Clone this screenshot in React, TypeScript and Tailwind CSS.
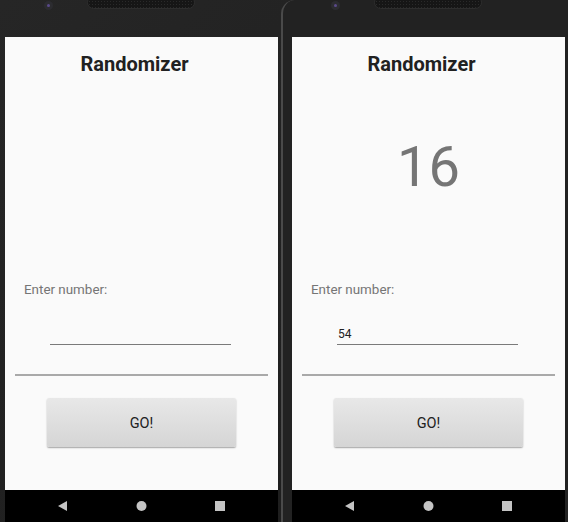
import React from "react";

interface PhoneProps {
  result?: string;
  value?: string;
}

const NavBar: React.FC = () => (
  <div className="h-[32px] bg-black flex items-center">
    <svg width="273" height="32" viewBox="0 0 273 32">
      <polygon points="62,11 62,21 53,16" fill="#c4c4c4" />
      <circle cx="136.5" cy="16" r="5" fill="#c4c4c4" />
      <rect x="210" y="11" width="10" height="10" fill="#c4c4c4" />
    </svg>
  </div>
);

const Bezel: React.FC = () => (
  <div className="h-[37px] flex items-start">
    <div className="ml-[39px] mt-[1px] w-[9px] h-[9px] rounded-full bg-[#2c2c30] flex items-center justify-center">
      <div className="w-[3px] h-[3px] rounded-full bg-[#5a4a8a]" />
    </div>
    <div className="ml-[34px] -mt-[4px] w-[108px] h-[13px] rounded-full bg-[#161616] border border-[#2e2e2e] [background-image:radial-gradient(#2a2a2a_0.6px,transparent_0.7px)] [background-size:3px_3px]" />
  </div>
);

const Phone: React.FC<PhoneProps> = ({ result, value }) => {
  return (
    <div className="w-[273px] flex flex-col">
      <Bezel />
      <div className="h-[453px] bg-[#fafafa] flex flex-col">
        <h1 className="pt-[13px] pr-[14px] text-[20px] leading-[28px] font-bold text-center text-[#212121]">
          Randomizer
        </h1>
        <div className="h-[202px]">
          {result && (
            <div className="pt-[61px] text-[56px] leading-[56px] text-center text-[#757575]">
              {result}
            </div>
          )}
        </div>
        <p className="pl-[19px] text-[13.4px] leading-[20px] text-[#757575]">Enter number:</p>
        <div className="ml-[45px] mr-[47px] mt-[25px] h-[20px] border-b border-[#7a7a7a] text-[12px] leading-[18px] pl-[1px] text-[#212121]">
          {value}
        </div>
        <div className="mx-[10px] mt-[29px] h-[2px] bg-[#a9a9a9]" />
        <button className="mx-[42px] mt-[22px] h-[49px] pt-[3px] rounded-[2px] bg-gradient-to-b from-[#e8e8e8] to-[#d5d5d5] shadow-[0_1px_1.5px_rgba(0,0,0,0.35)] text-[14.5px] text-[#212121]">
          GO!
        </button>
      </div>
      <NavBar />
    </div>
  );
};

export default function App() {
  return (
    <div
      className="w-[568px] h-[522px] flex bg-gradient-to-br from-[#262626] to-[#1b1b1b] overflow-hidden"
      style={{ fontFamily: "Roboto, 'Liberation Sans', sans-serif" }}
    >
      <div className="pl-[5px] pr-[3px]">
        <Phone />
      </div>
      <div className="border-l-2 border-[#4a4a4a] rounded-tl-[14px] pl-[9px] pr-[3px] bg-[#222222]">
        <Phone result="16" value="54" />
      </div>
    </div>
  );
}
